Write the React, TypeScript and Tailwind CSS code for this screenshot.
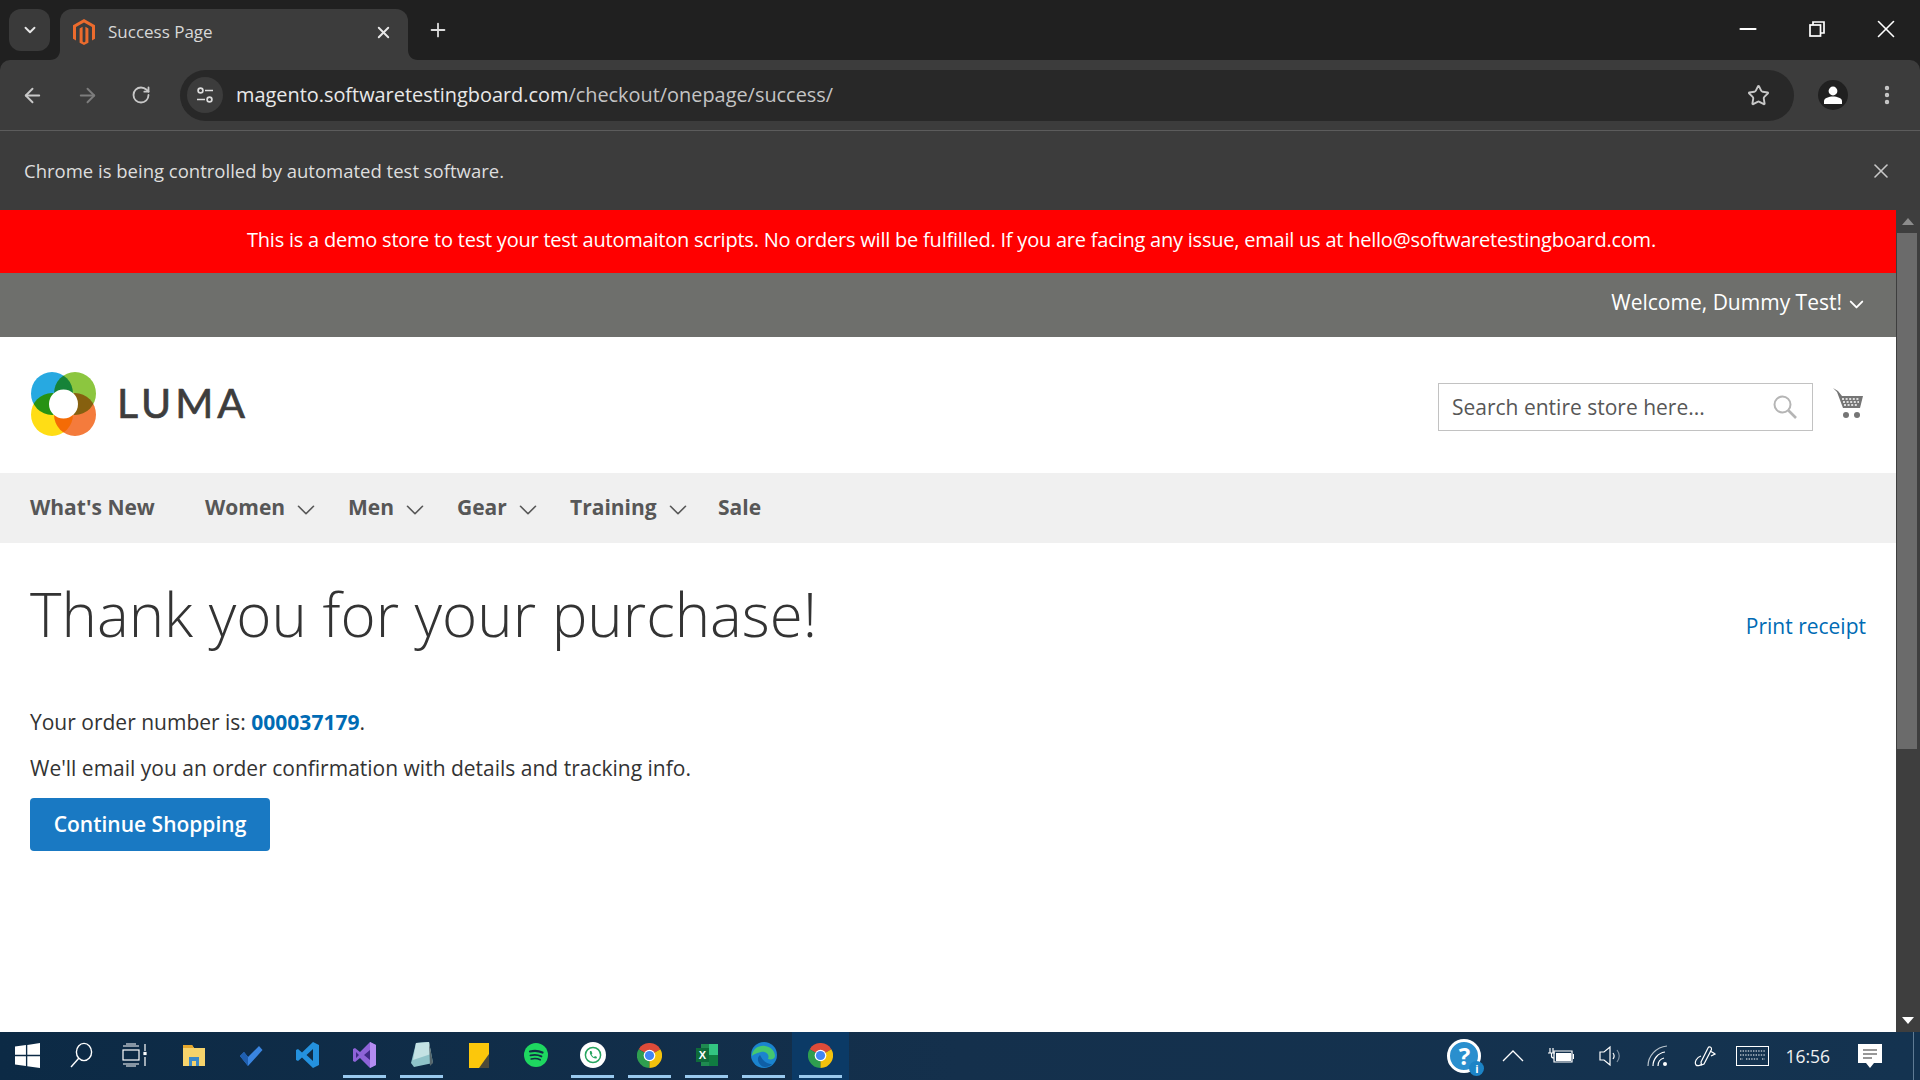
import React from 'react';
import {
  ArrowLeft,
  ArrowRight,
  RotateCw,
  Star,
  EllipsisVertical,
  X,
  Plus,
  ChevronDown,
  Minus,
} from 'lucide-react';

const navItems = [
  { label: "What's New", width: 'w-[175px]' },
  { label: 'Women', width: 'w-[143px]', caret: true },
  { label: 'Men', width: 'w-[109px]', caret: true },
  { label: 'Gear', width: 'w-[113px]', caret: true },
  { label: 'Training', width: 'w-[148px]', caret: true },
  { label: 'Sale', width: 'w-[60px]' },
];

const ChromeLogo = () => (
  <svg width="25" height="25" viewBox="0 0 24 24">
    <path d="M12 12 L22.4 6 A12 12 0 0 0 1.6 6 Z" fill="#dd4b39" />
    <path d="M12 12 L1.6 6 A12 12 0 0 0 12 24 Z" fill="#2f9e4f" />
    <path d="M12 12 L12 24 A12 12 0 0 0 22.4 6 Z" fill="#f4c20d" />
    <circle cx="12" cy="12" r="5.6" fill="#fff" />
    <circle cx="12" cy="12" r="4.4" fill="#4285f4" />
  </svg>
);

const LumaLogo = () => (
  <svg width="65" height="64" viewBox="0 0 65 64" className="isolate ml-px">
    <ellipse cx="21" cy="21.5" rx="21" ry="21.5" fill="#27a9e1" className="mix-blend-multiply" />
    <ellipse cx="44" cy="21.5" rx="21" ry="21.5" fill="#8cc63f" className="mix-blend-multiply" />
    <ellipse cx="21" cy="42.5" rx="21" ry="21.5" fill="#ffdd15" className="mix-blend-multiply" />
    <ellipse cx="44" cy="42.5" rx="21" ry="21.5" fill="#f47b3c" className="mix-blend-multiply" />
    <circle cx="32.5" cy="32" r="14.5" fill="#fff" />
  </svg>
);

const TaskIcon = ({ children, underline, active }: { children: React.ReactNode; underline?: boolean; active?: boolean }) => (
  <div className={`relative h-12 w-[57px] flex items-center justify-center pb-[2px] ${active ? 'bg-[#0b3a66]' : ''}`}>
    {children}
    {underline && <div className="absolute bottom-[2px] left-[7px] right-[7px] h-[3px] bg-[#99c9ee]" />}
  </div>
);

export default function App() {
  return (
    <div className="w-[1920px] h-[1080px] overflow-hidden flex flex-col bg-white font-['Open_Sans',sans-serif]">
      {/* tab strip */}
      <div className="h-[60px] bg-[#202020] flex items-end text-white shrink-0">
        <div className="w-[60px] h-[60px] pl-[9px] pt-[9px]">
          <div className="w-[41px] h-[42px] rounded-[12px] bg-[#3a3a3a] flex items-center justify-center">
            <ChevronDown size={18} strokeWidth={2.5} className="text-[#e6e6e6]" />
          </div>
        </div>
        <div className="relative w-[348px] h-[51px] rounded-t-[12px] bg-[#3c3c3c] flex items-center pl-[13px] pr-[15px] pb-[5px]">
          <svg width="10" height="10" viewBox="0 0 10 10" className="absolute bottom-0 -left-[10px]">
            <path d="M10 0 V10 H0 C6 10 10 6 10 0 Z" fill="#3c3c3c" />
          </svg>
          <svg width="10" height="10" viewBox="0 0 10 10" className="absolute bottom-0 -right-[10px]">
            <path d="M0 0 V10 H10 C4 10 0 6 0 0 Z" fill="#3c3c3c" />
          </svg>
          <svg width="22" height="26" viewBox="0 0 22 26">
            <path
              d="M11 0 L22 6.3 V19.7 L19 21.4 V8 L11 3.4 L3 8 V21.4 L0 19.7 V6.3 Z M9.6 7.8 V22.6 L11 23.5 L12.4 22.6 V7.8 L15.4 9.5 V23.7 L11 26 L6.6 23.7 V9.5 Z"
              fill="#ec6b2d"
            />
          </svg>
          <span className="ml-[13px] text-[17px] text-[#d8d8d8] flex-1">Success Page</span>
          <X size={19} strokeWidth={2.4} className="text-[#e8e8e8]" />
        </div>
        <div className="w-[58px] h-[51px] flex items-center justify-center pb-[9px] pl-[1px]">
          <Plus size={22} strokeWidth={2} className="text-[#dcdcdc]" />
        </div>
        <div className="flex-1" />
        <div className="h-[60px] flex items-center pb-[2px]">
          <div className="w-[69px] flex justify-center">
            <Minus size={26} strokeWidth={1.8} />
          </div>
          <div className="w-[69px] flex justify-center">
            <svg width="16" height="16" viewBox="0 0 16 16" fill="none" stroke="#fff" strokeWidth="1.7">
              <rect x="1" y="4" width="10.5" height="11" />
              <path d="M4 4 V1 H15 V12 H11.5" />
            </svg>
          </div>
          <div className="w-[69px] flex justify-center">
            <X size={30} strokeWidth={1.3} />
          </div>
        </div>
      </div>

      {/* toolbar */}
      <div className="bg-[#202020] shrink-0">
        <div className="h-[71px] bg-[#3c3c3c] border-b border-[#5c5c5c] rounded-t-[10px] flex items-center">
          <div className="w-[180px] flex items-center pl-[21px] gap-[32px] text-[#c8c8c8]">
            <ArrowLeft size={23} strokeWidth={2} />
            <ArrowRight size={23} strokeWidth={2} className="text-[#7d7d7d]" />
            <RotateCw size={20} strokeWidth={2.2} />
          </div>
          <div className="w-[1614px] h-[51px] rounded-full bg-[#282828] flex items-center pl-[7px] pr-[24px]">
            <div className="w-[36px] h-[36px] rounded-full bg-[#3c3c3c] flex items-center justify-center">
              <svg width="20" height="20" viewBox="0 0 20 20" fill="none" stroke="#dcdcdc" strokeWidth="1.7">
                <circle cx="5.5" cy="5.5" r="2.4" />
                <circle cx="14.5" cy="14.5" r="2.4" />
                <path d="M10 5.5 H18 M2 14.5 H10" />
              </svg>
            </div>
            <div className="ml-[13px] text-[19.9px] flex-1 pb-[1px]">
              <span className="text-[#e8e8e8]">magento.softwaretestingboard.com</span>
              <span className="text-[#c4c4c4]">/checkout/onepage/success/</span>
            </div>
            <Star size={23} strokeWidth={2} className="text-[#c8c8c8]" />
          </div>
          <div className="flex-1 flex items-center pl-[24px]">
            <div className="w-[30px] h-[30px] rounded-full bg-[#202020] flex items-center justify-center">
              <svg width="20" height="20" viewBox="0 0 20 20" fill="#fff">
                <circle cx="10" cy="6" r="4.4" />
                <path d="M1 19 V16 C1 13 6 11.4 10 11.4 C14 11.4 19 13 19 16 V19 Z" />
              </svg>
            </div>
            <EllipsisVertical size={24} strokeWidth={2.4} className="text-[#c8c8c8] ml-[27px]" />
          </div>
        </div>
      </div>

      {/* infobar */}
      <div className="h-[79px] bg-[#3c3c3c] flex items-center pl-[24px] pr-[27px] shrink-0">
        <span className="flex-1 text-[18.5px] text-[#dedede]">Chrome is being controlled by automated test software.</span>
        <X size={24} strokeWidth={1.6} className="text-[#c8c8c8]" />
      </div>

      {/* viewport */}
      <div className="h-[822px] flex shrink-0">
        <div className="w-[1896px] flex flex-col">
          <div className="h-[63px] bg-[#ff0000] flex items-center justify-center pb-[3px] pl-[7px] text-white text-[20px] tracking-[-0.22px]">
            This is a demo store to test your test automaiton scripts. No orders will be fulfilled. If you are facing any issue, email us at hello@softwaretestingboard.com.
          </div>
          <div className="h-[64px] bg-[#6e6f6c] flex items-center justify-end pr-[28px] pb-[5px] text-white text-[21px]">
            Welcome, Dummy Test!
            <ChevronDown size={23} strokeWidth={2} className="ml-[3px] mt-[3px]" />
          </div>
          <div className="h-[136px] flex items-center justify-between pl-[30px] pr-[30px] pb-[2px]">
            <div className="flex items-center">
              <LumaLogo />
              <span className="ml-[21px] text-[41px] leading-none tracking-[4px] text-[#3d3d3d] font-['Lato',sans-serif] [-webkit-text-stroke:0.7px_#3d3d3d] mb-[4px]">LUMA</span>
            </div>
            <div className="flex items-center">
              <div className="w-[375px] h-[48px] border border-[#c2c2c2] flex items-center pl-[13px] pr-[14px] mt-[6px]">
                <span className="flex-1 text-[21px] text-[#575757] pt-[2px]">Search entire store here...</span>
                <svg width="26" height="26" viewBox="0 0 26 26" fill="none" stroke="#b5b5b5">
                  <circle cx="10.5" cy="10.5" r="8" strokeWidth="2" />
                  <path d="M16.5 16.5 L24 24" strokeWidth="2.6" />
                </svg>
              </div>
              <svg width="32" height="32" viewBox="0 0 32 32" className="ml-[19px] mr-[2px] -mt-[3px]">
                <path d="M1 1 L6 4 L10 9 H31 L28 21 H11 L5 5 Z" fill="#757575" />
                <path d="M10 12 H28 M11 15 H27 M12 18 H26" stroke="#fff" strokeWidth="1.4" strokeDasharray="2 1.6" />
                <circle cx="14" cy="28" r="3" fill="#757575" />
                <circle cx="25" cy="28" r="3" fill="#757575" />
              </svg>
            </div>
          </div>
          <nav className="h-[70px] bg-[#f0f0f0] flex items-center pl-[30px] text-[#575757] text-[21px] font-bold">
            {navItems.map((item) => (
              <div key={item.label} className={`${item.width} shrink-0 flex items-center`}>
                {item.label}
                {item.caret && <ChevronDown size={30} strokeWidth={1.3} className="ml-[6px] mt-[3px]" />}
              </div>
            ))}
          </nav>
          <main className="flex-1 bg-white px-[30px] text-[#333]">
            <div className="flex items-center justify-between pt-[33px]">
              <h1 className="text-[60px] leading-[76px] font-light">Thank you for your purchase!</h1>
              <a className="text-[21px] text-[#006bb4] mt-[25px]">Print receipt</a>
            </div>
            <p className="mt-[55px] text-[21px] leading-[30px]">
              Your order number is: <span className="font-bold text-[#006bb4]">000037179</span>.
            </p>
            <p className="mt-[16px] text-[21px] leading-[30px]">We'll email you an order confirmation with details and tracking info.</p>
            <button className="mt-[15px] w-[240px] h-[53px] rounded-[4px] bg-[#1979c3] text-white text-[21px] font-semibold">Continue Shopping</button>
          </main>
        </div>
        <div className="w-[24px] bg-[#3e3e3e] flex flex-col">
          <div className="h-[23px] w-full flex items-center justify-center">
            <svg width="12" height="7" viewBox="0 0 12 7">
              <path d="M6 0 L12 7 H0 Z" fill="#8c8c8c" />
            </svg>
          </div>
          <div className="flex-1 ml-px mr-[3px] mb-[265px] bg-[#6b6b6b]" />
          <div className="h-[18px] w-full flex items-center justify-center pb-[5px]">
            <svg width="12" height="7" viewBox="0 0 12 7">
              <path d="M6 7 L12 0 H0 Z" fill="#fff" />
            </svg>
          </div>
        </div>
      </div>

      {/* taskbar */}
      <div className="h-[48px] bg-gradient-to-r from-[#0c2a45] via-[#14304c] to-[#143350] flex items-center shrink-0 text-white">
        <div className="w-[54px] flex justify-center pb-[2px]">
          <svg width="25" height="25" viewBox="0 0 24 24" fill="#fff">
            <path d="M0 3.4 L10.5 2 V11.3 H0 Z M11.8 1.8 L24 0 V11.3 H11.8 Z M0 12.6 H10.5 V22 L0 20.6 Z M11.8 12.6 H24 V24 L11.8 22.2 Z" />
          </svg>
        </div>
        <div className="w-[54px] flex justify-center pb-[2px]">
          <svg width="26" height="26" viewBox="0 0 26 26" fill="none" stroke="#fff" strokeWidth="1.4">
            <ellipse cx="16" cy="10" rx="7.6" ry="8.6" />
            <path d="M11 16 L3 25" />
          </svg>
        </div>
        <div className="w-[54px] flex justify-center pb-[2px]">
          <svg width="26" height="24" viewBox="0 0 26 24" fill="none" stroke="#fff" strokeWidth="1.2">
            <path d="M1 3 H17 M4 1 H14 M1 21 H17 M4 23 H14" />
            <rect x="1" y="7" width="16" height="10" />
            <path d="M23 1 V8 M23 14 V23" />
            <rect x="22" y="9.5" width="2" height="2" fill="#fff" />
          </svg>
        </div>
        <div className="w-[3px]" />
        <TaskIcon>
          <svg width="24" height="24" viewBox="0 0 24 24">
            <path d="M1 2 H10 L12 5 H23 V23 H1 Z" fill="#f6d36b" />
            <path d="M1 2 H10 L12 5 H1 Z" fill="#e5a72c" />
            <path d="M7 14 H17 V23 H14 V18 H10 V23 H7 Z" fill="#3a88c9" />
          </svg>
        </TaskIcon>
        <TaskIcon>
          <svg width="24" height="24" viewBox="0 0 24 24">
            <path d="M1 13 L5 9 L9 14 L20 3 L23.5 7 L9 23 Z" fill="#3a85e0" />
            <path d="M5 9 L9 14 L9 23 L1 13 Z" fill="#1f5fb0" />
          </svg>
        </TaskIcon>
        <TaskIcon>
          <svg width="24" height="26" viewBox="0 0 24 26">
            <path d="M17 0 L23 3 V23 L17 26 L6 15.5 L2 19 L0 18 V8 L2 7 L6 10.5 Z M17 7 L10.5 13 L17 19 Z" fill="#2491de" />
          </svg>
        </TaskIcon>
        <TaskIcon underline>
          <svg width="24" height="26" viewBox="0 0 24 26">
            <path d="M17 0 L23 3 V23 L17 26 L7 16 L2 20 L0 19 V7 L2 6 L7 10 Z" fill="#8e63d8" />
            <path d="M17 8 L11 13 L17 18 Z M3 10 V16 L6 13 Z" fill="#3f2a85" />
            <path d="M17 0 L23 3 V23 L17 26 Z" fill="#b48cf2" />
          </svg>
        </TaskIcon>
        <TaskIcon underline>
          <svg width="24" height="26" viewBox="0 0 24 26">
            <path d="M6 1 L19 0 L23 21 L4 25 L1 21 Z" fill="#8fc3c9" />
            <path d="M6 1 L19 0 L21 12 L3 18 Z" fill="#c4e2e4" />
            <path d="M19 0 L23 21 L20 24 Z" fill="#55656b" />
          </svg>
        </TaskIcon>
        <TaskIcon>
          <svg width="24" height="25" viewBox="0 0 24 25">
            <path d="M2 0 H22 V25 H2 Z" fill="#fcc70b" />
            <path d="M22 11 V25 H12 Z" fill="#4d4a3a" />
          </svg>
        </TaskIcon>
        <TaskIcon>
          <svg width="24" height="24" viewBox="0 0 24 24" fill="none" stroke="#132c44" strokeLinecap="round">
            <circle cx="12" cy="12" r="12" fill="#1ed760" stroke="none" />
            <path d="M6 8.5 C10 7.4 14.5 7.6 18.5 9.6" strokeWidth="2.2" />
            <path d="M6.5 12.4 C10 11.5 14 11.7 17.4 13.4" strokeWidth="1.9" />
            <path d="M7.2 16 C10 15.3 13.5 15.4 16.2 16.8" strokeWidth="1.6" />
          </svg>
        </TaskIcon>
        <TaskIcon underline>
          <svg width="26" height="26" viewBox="0 0 26 26" fill="none">
            <circle cx="13" cy="13" r="13" fill="#fff" />
            <circle cx="13" cy="13" r="7.6" stroke="#25a55f" strokeWidth="1.5" />
            <path d="M10 9 C9 12 12.5 17 16.5 16.5 L17 15 L15 14 L14 15 C13 14.5 12 13.5 11.6 12.4 L12.4 11.4 L11.4 9 Z" fill="#25a55f" />
          </svg>
        </TaskIcon>
        <TaskIcon underline>
          <ChromeLogo />
        </TaskIcon>
        <TaskIcon underline>
          <svg width="24" height="24" viewBox="0 0 24 24">
            <path d="M6 1 H23 V23 H6 Z" fill="#1f8a50" />
            <path d="M14 1 H23 V12 H14 Z" fill="#33c481" />
            <path d="M14 12 H23 V23 H14 Z" fill="#107c41" />
            <rect x="1" y="5" width="13" height="14" fill="#0e6b3a" />
            <text x="7.5" y="16" textAnchor="middle" fontSize="11" fontWeight="700" fill="#fff" fontFamily="Liberation Sans, sans-serif">X</text>
          </svg>
        </TaskIcon>
        <TaskIcon underline>
          <svg width="26" height="26" viewBox="0 0 26 26">
            <circle cx="13" cy="13" r="13" fill="#1b84cf" />
            <path d="M1 14 C1 7 8 3 14 4 C20 5 24 9 24 14 C24 17 20 18 17 17 C19 13 15 9 10 10 C5 11 2 13 1 14 Z" fill="#45c86f" />
            <path d="M13 25 C7 23 5 16 9 13 C11 17 14 22 21 22 C19 24 16 25.5 13 25 Z" fill="#0f5fa6" />
          </svg>
        </TaskIcon>
        <TaskIcon underline active>
          <ChromeLogo />
        </TaskIcon>
        <div className="flex-1" />
        {/* tray */}
        <div className="w-[34px] h-[34px] relative mr-[20px]">
          <div className="w-[34px] h-[34px] rounded-full bg-[#2a8fce] border-[3px] border-white flex items-center justify-center text-[24px] font-bold leading-none">?</div>
          <div className="absolute -right-[3px] -bottom-[3px] w-[15px] h-[15px] rounded-full bg-[#1c84c6] text-[11px] font-bold leading-[15px] text-center">i</div>
        </div>
        <svg width="24" height="14" viewBox="0 0 24 14" fill="none" stroke="#fff" strokeWidth="1.3" className="mr-[23px]">
          <path d="M2 12 L12 2 L22 12" />
        </svg>
        <svg width="26" height="18" viewBox="0 0 26 18" fill="none" stroke="#fff" strokeWidth="1.2" className="mr-[25px]">
          <path d="M0 6 H7 M2 1 V6 M5 1 V6" />
          <path d="M3.5 6 V9 Q3.5 11 6 11" />
          <path d="M6 4 H24 V15 H6 Z" />
          <rect x="8" y="6" width="15" height="8" fill="#fff" stroke="none" />
          <path d="M25.5 7 V12" />
        </svg>
        <svg width="24" height="22" viewBox="0 0 24 22" fill="none" stroke="#fff" strokeWidth="1.2" className="mr-[24px]">
          <path d="M1 7 H5 L11 2 V20 L5 15 H1 Z" />
          <path d="M14 8 C15.5 10 15.5 12 14 14" />
          <path d="M18 5 C21 9 21 13 18 17" stroke="#7b8ea0" />
        </svg>
        <svg width="24" height="22" viewBox="0 0 24 22" fill="none" stroke="#fff" strokeWidth="1.2" className="mr-[23px]">
          <path d="M1 21 C1 11 9 2 20 1" stroke="#b8c3cc" />
          <path d="M6 21 C6 14 11 8 18 7" />
          <path d="M11 21 C11 17 13 14 17 13" />
          <circle cx="18" cy="19" r="2" fill="#fff" stroke="none" />
        </svg>
        <svg width="22" height="22" viewBox="0 0 22 22" fill="none" stroke="#fff" strokeWidth="1.2" className="mr-[20px]">
          <path d="M7 17 L14 3 C15 1 18 2 17.5 4.5 L10 19 L7.5 20 Z" />
          <path d="M7 11 C3 12 0 17 2 20 C3 21 6 21 8 19" />
          <path d="M16 6 C18 7 20 8 21 9 L17 11" />
        </svg>
        <svg width="33" height="20" viewBox="0 0 33 20" fill="none" stroke="#fff" strokeWidth="1" className="mr-[16px]">
          <rect x="0.5" y="0.5" width="32" height="19" />
          <path d="M4 5 H29 M4 9 H29 M4 13 H7 M10 13 H23 M26 13 H29" strokeDasharray="1.4 1.2" />
        </svg>
        <span className="text-[17.5px] text-[#f0f0f0] mr-[28px]">16:56</span>
        <svg width="24" height="25" viewBox="0 0 24 25" className="mr-[31px]">
          <path d="M0 0 H24 V19 H16 L12 24 L8 19 H0 Z" fill="#fff" />
          <path d="M5 6 H19 M5 10 H19 M5 14 H14" stroke="#333" strokeWidth="1.2" />
        </svg>
        <div className="w-px h-full bg-[#5f7b94] mr-[6px]" />
      </div>
    </div>
  );
}
